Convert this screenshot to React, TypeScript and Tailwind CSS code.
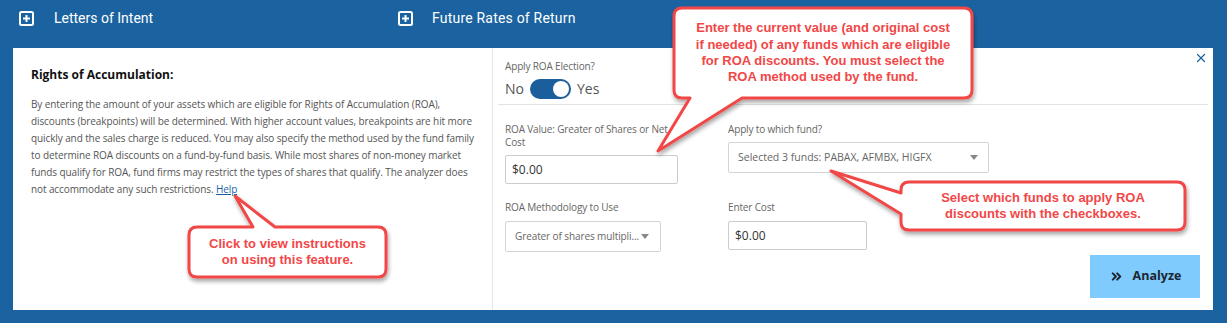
import { ChevronsRight, X } from "lucide-react";

const callouts = [
  {
    d: "M682,8 H964 Q972,8 972,16 V90 Q972,98 964,98 H742 L658,151 L690,98 H682 Q674,98 674,90 V16 Q674,8 682,8 Z",
    box: "left-[674px] top-[8px] w-[298px] h-[90px]",
    lines: [
      "Enter the current value (and original cost",
      "if needed) of any funds which are eligible",
      "for ROA discounts. You must select the",
      "ROA method used by the fund.",
    ],
  },
  {
    d: "M197,227 H253 L235,196 L275,227 H378 Q386,227 386,235 V269 Q386,277 378,277 H197 Q189,277 189,269 V235 Q189,227 197,227 Z",
    box: "left-[189px] top-[227px] w-[197px] h-[50px]",
    lines: ["Click to view instructions", "on using this feature."],
  },
  {
    d: "M909,182 H1177 Q1185,182 1185,190 V222 Q1185,230 1177,230 H909 Q901,230 901,222 V214 L831,171 L901,193 V190 Q901,182 909,182 Z",
    box: "left-[901px] top-[182px] w-[284px] h-[48px]",
    lines: ["Select which funds to apply ROA", "discounts with the checkboxes."],
  },
];

const intro = [
  "By entering the amount of your assets which are eligible for Rights of Accumulation (ROA),",
  "discounts (breakpoints) will be determined. With higher account values, breakpoints are hit more",
  "quickly and the sales charge is reduced. You may also specify the method used by the fund family",
  "to determine ROA discounts on a fund-by-fund basis. While most shares of non-money market",
  "funds qualify for ROA, fund firms may restrict the types of shares that qualify. The analyzer does",
];

function PlusBox() {
  return (
    <svg width="15" height="15" viewBox="0 0 15 15" className="shrink-0">
      <rect x="1" y="1" width="13" height="13" rx="1.5" fill="none" stroke="white" strokeWidth="2" />
      <path d="M7.5 4 V11 M4 7.5 H11" stroke="white" strokeWidth="2" />
    </svg>
  );
}

function Caret() {
  return (
    <svg width="8" height="5" viewBox="0 0 8 5" className="shrink-0">
      <path d="M0 0 H8 L4 5 Z" fill="#888" />
    </svg>
  );
}

export default function App() {
  return (
    <div className="relative w-[1227px] h-[323px] overflow-hidden bg-[#1b63a0] font-['Open_Sans',sans-serif]">
      {/* accordion headers */}
      <div className="flex h-[48px] pt-[11px] pl-[19px] text-white text-[14px] font-['Roboto',sans-serif]">
        <div className="flex w-[379px] items-start gap-[20px]">
          <PlusBox />
          <span className="leading-[15px]">Letters of Intent</span>
        </div>
        <div className="flex items-start gap-[19px]">
          <PlusBox />
          <span className="leading-[15px] tracking-[0.2px]">Future Rates of Return</span>
        </div>
      </div>

      <div className="ml-[13px] flex h-[262px] w-[1200px] bg-white">
        {/* description */}
        <div className="w-[480px] border-r border-[#e6e6e6] px-[18px] pt-[17px]">
          <h2 className="text-[12px] leading-[20px] font-bold text-[#111]">Rights of Accumulation:</h2>
          <p className="mt-[11px] text-[10px] leading-[17px] tracking-[-0.1px] text-[#555]">
            {intro.map((l) => (
              <span key={l} className="block whitespace-nowrap">{l}</span>
            ))}
            <span className="block whitespace-nowrap">
              not accommodate any such restrictions.{" "}
              <a href="#" className="text-[#1d5fa5] underline">Help</a>
            </span>
          </p>
        </div>

        {/* form */}
        <div className="relative flex-1 pt-[10px]">
          <button className="absolute right-[5px] top-[3px] text-[#1b63a0]">
            <X size={14} strokeWidth={2.2} />
          </button>

          <div className="mx-[5px] border-b border-[#e3e3e3] pb-[5px] pl-[7px]">
            <div className="text-[10px] leading-[16px] tracking-[-0.15px] text-[#666]">Apply ROA Election?</div>
            <div className="mt-[4px] flex items-center gap-[6px] text-[14px] text-[#555]">
              <span>No</span>
              <span className="flex h-[20px] w-[41px] items-center justify-end rounded-full bg-[#1a5e9c] px-[2px]">
                <span className="h-[16px] w-[16px] rounded-full bg-white" />
              </span>
              <span>Yes</span>
            </div>
          </div>

          <div className="mt-[18px] grid grid-cols-[173px_261px] gap-x-[50px] gap-y-[17px] pl-[12px] text-[#666]">
            <div>
              <div className="text-[10px] leading-[13px] tracking-[-0.15px]">ROA Value: Greater of Shares or Net Cost</div>
              <div className="mt-[6px] flex h-[29px] items-center rounded-[2px] border border-[#ccc] px-[6px] text-[12px] text-[#333]">
                $0.00
              </div>
            </div>
            <div>
              <div className="text-[10px] leading-[13px] tracking-[-0.15px]">Apply to which fund?</div>
              <div className="mt-[6px] flex h-[31px] items-center justify-between rounded-[2px] border border-[#d4d4d4] pl-[9px] pr-[10px] text-[10.5px]">
                <span className="whitespace-nowrap">Selected 3 funds: PABAX, AFMBX, HIGFX</span>
                <Caret />
              </div>
            </div>
            <div>
              <div className="text-[10px] leading-[13px] tracking-[-0.15px]">ROA Methodology to Use</div>
              <div className="mt-[7px] flex h-[31px] w-[156px] items-center justify-between rounded-[2px] border border-[#d4d4d4] pl-[9px] pr-[11px] text-[10px] tracking-[-0.1px]">
                <span className="whitespace-nowrap">Greater of shares multipli...</span>
                <Caret />
              </div>
            </div>
            <div>
              <div className="text-[10px] leading-[13px] tracking-[-0.15px]">Enter Cost</div>
              <div className="mt-[7px] flex h-[29px] w-[139px] items-center rounded-[2px] border border-[#ccc] px-[6px] text-[12px] text-[#333]">
                $0.00
              </div>
            </div>
          </div>

          <div className="mt-[3px] flex justify-end pr-[13px]">
            <button className="flex h-[43px] w-[110px] items-center justify-center gap-[9px] bg-[#80cbfd] text-[12.5px] font-bold text-[#1c2633]">
              <ChevronsRight size={15} strokeWidth={3.2} />
              Analyze
            </button>
          </div>
        </div>
      </div>

      {/* tutorial callouts */}
      <svg className="pointer-events-none absolute inset-0" width="1227" height="323">
        <defs>
          <filter id="sh" x="-10%" y="-10%" width="130%" height="140%">
            <feDropShadow dx="1" dy="3" stdDeviation="2" floodColor="#000" floodOpacity="0.35" />
          </filter>
        </defs>
        {callouts.map((c, i) => (
          <path key={i} d={c.d} fill="white" stroke="#f24747" strokeWidth="3" strokeLinejoin="round" filter="url(#sh)" />
        ))}
      </svg>
      {callouts.map((c, i) => (
        <div
          key={i}
          className={`absolute ${c.box} flex flex-col items-center justify-center text-center text-[13px] leading-[16.3px] font-bold text-[#f24747] font-['Liberation_Sans_Narrow','Liberation_Sans',Arial,sans-serif]`}
        >
          {c.lines.map((l) => (
            <span key={l} className="whitespace-nowrap">{l}</span>
          ))}
        </div>
      ))}
    </div>
  );
}
